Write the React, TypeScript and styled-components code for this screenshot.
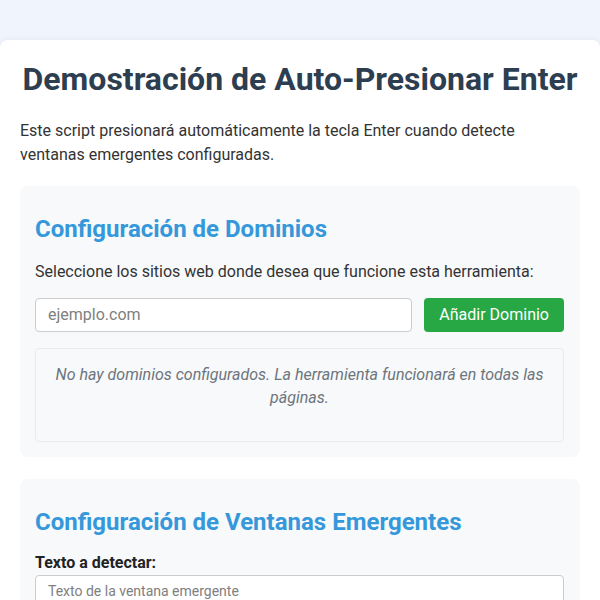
import React from "react";
import styled, { createGlobalStyle } from "styled-components";

const Global = createGlobalStyle`
  html, body { margin: 0; padding: 0; }
  body {
    background: #f0f4fc;
    font-family: Roboto, "Liberation Sans", Arial, sans-serif;
    color: #333;
    line-height: 1.5;
  }
  * { box-sizing: border-box; }
`;

const Page = styled.div`
  padding-top: 40px;
`;

const Card = styled.main`
  background: #fff;
  border-radius: 8px;
  box-shadow: 0 2px 10px rgba(0, 0, 0, 0.08);
  padding: 20px 20px 20px;
`;

const Title = styled.h1`
  margin: 0 0 21px;
  font-size: 32px;
  line-height: normal;
  font-weight: 700;
  color: #2c3e50;
  text-align: center;
  white-space: nowrap;
`;

const Intro = styled.p`
  margin: 0 0 19px;
  font-size: 16px;
  line-height: 24px;
`;

const Section = styled.section`
  background: #f8f9fa;
  border-radius: 8px;
  padding: 15px 16px 15px 15px;
  & + & {
    margin-top: 22px;
  }
`;

const SectionTitle = styled.h2`
  margin: 14px 0 16px;
  font-size: 24px;
  line-height: 1.2;
  font-weight: 700;
  color: #3498db;
`;

const Text = styled.p`
  margin: 0 0 14px;
  font-size: 16px;
  line-height: 24px;
`;

const Row = styled.div`
  display: flex;
  gap: 12px;
  margin-bottom: 16px;
`;

const Input = styled.input<{ $small?: boolean }>`
  flex: 1;
  width: 100%;
  height: ${(p) => (p.$small ? "32px" : "34px")};
  padding: 0 12px;
  border: 1px solid #ccc;
  border-radius: 4px;
  background: #fff;
  font-family: inherit;
  font-size: ${(p) => (p.$small ? "14px" : "16px")};
  color: #333;
  &::placeholder {
    color: #808080;
  }
`;

const Button = styled.button`
  height: 34px;
  padding: 0 15px;
  border: none;
  border-radius: 4px;
  background: #28a745;
  color: #fff;
  font-family: inherit;
  font-size: 16px;
  white-space: nowrap;
  cursor: pointer;
`;

const EmptyBox = styled.div`
  border: 1px solid #e9ecef;
  border-radius: 4px;
  background: #f8f9fa;
  padding: 14px 12px 32px;
  text-align: center;
  font-style: italic;
  color: #6c757d;
  font-size: 16px;
  line-height: 23px;
`;

const Label = styled.label`
  display: block;
  margin: 0 0 3px;
  font-size: 16px;
  font-weight: 700;
  line-height: 19px;
  color: #222;
`;

export default function App() {
  return (
    <>
      <Global />
      <Page>
        <Card>
          <Title>Demostración de Auto-Presionar Enter</Title>
          <Intro>
            Este script presionará automáticamente la tecla Enter cuando detecte
            ventanas emergentes configuradas.
          </Intro>
          <Section>
            <SectionTitle>Configuración de Dominios</SectionTitle>
            <Text>Seleccione los sitios web donde desea que funcione esta herramienta:</Text>
            <Row>
              <Input placeholder="ejemplo.com" />
              <Button>Añadir Dominio</Button>
            </Row>
            <EmptyBox>
              No hay dominios configurados. La herramienta funcionará en todas las
              páginas.
            </EmptyBox>
          </Section>
          <Section>
            <SectionTitle>Configuración de Ventanas Emergentes</SectionTitle>
            <Label>Texto a detectar:</Label>
            <Input $small placeholder="Texto de la ventana emergente" />
          </Section>
        </Card>
      </Page>
    </>
  );
}
